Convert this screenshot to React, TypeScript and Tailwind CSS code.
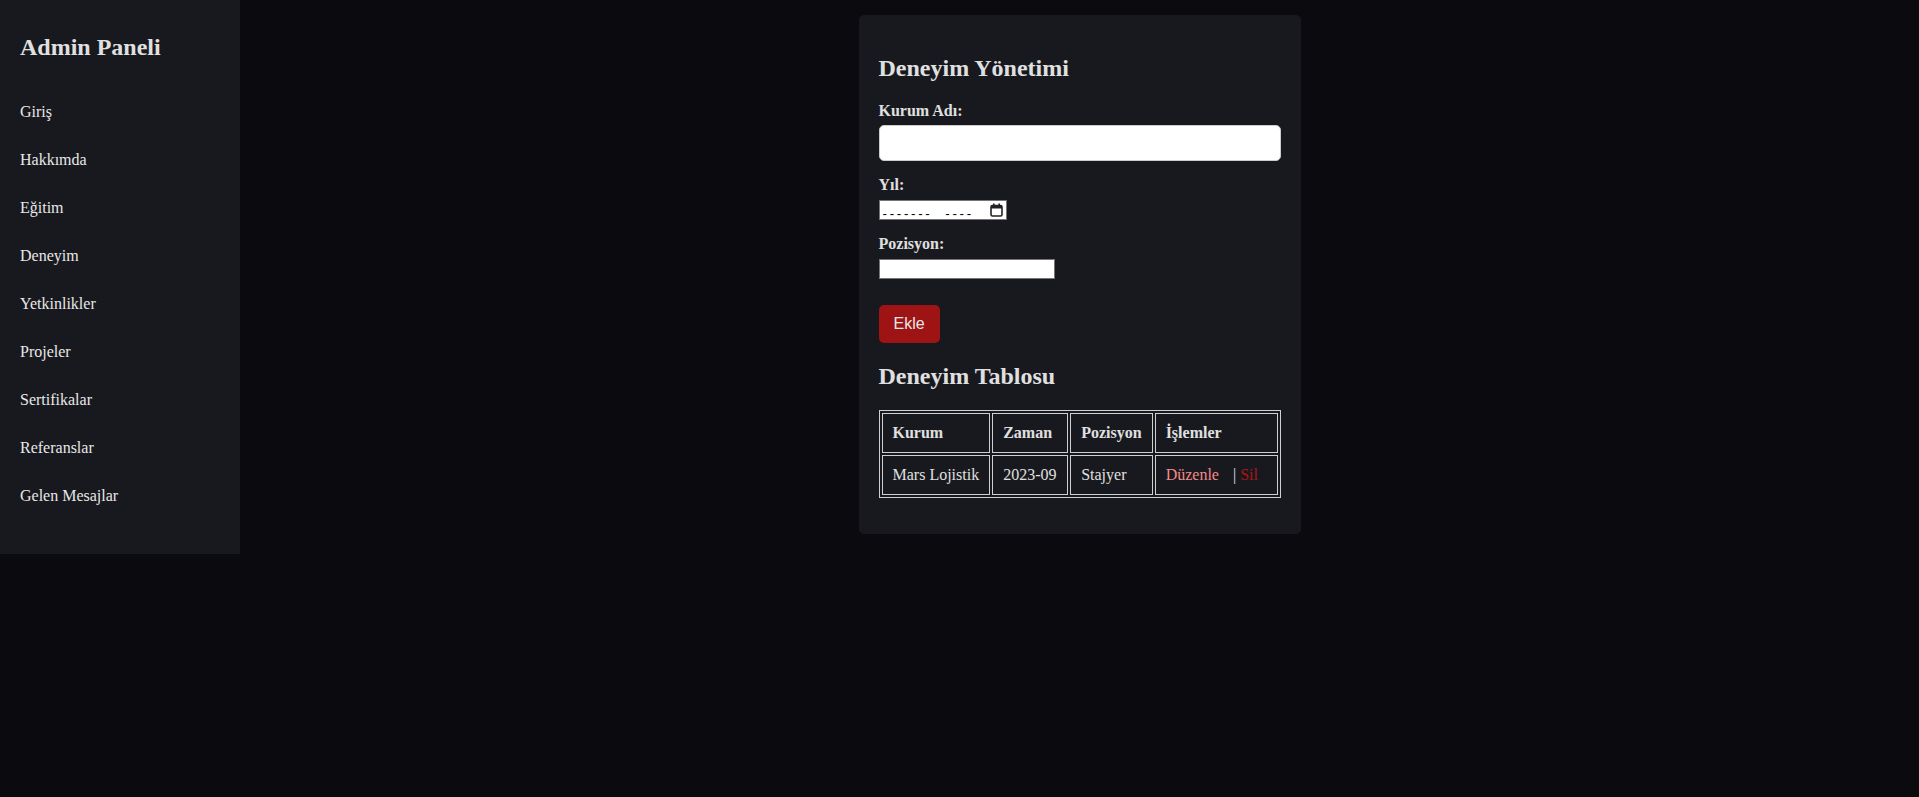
import React, {useState} from 'react'

const MENU = [
    'Giriş',
    'Hakkımda',
    'Eğitim',
    'Deneyim',
    'Yetkinlikler',
    'Projeler',
    'Sertifikalar',
    'Referanslar',
    'Gelen Mesajlar',
]

function CalendarIcon(){
    return (
        <svg width="13" height="14" viewBox="0 0 13 14" className="block">
            <rect x="1" y="2.5" width="11" height="10.5" rx="1.5" fill="none" stroke="#222" strokeWidth="1.6" />
            <rect x="1" y="2.5" width="11" height="3" fill="#222" />
            <rect x="3" y="0.5" width="1.6" height="3" fill="#222" />
            <rect x="8.4" y="0.5" width="1.6" height="3" fill="#222" />
        </svg>
    )
}

export default function App(){
    const [rows] = useState<any[]>([{kurum:'Mars Lojistik',zaman:'2023-09',pozisyon:'Stajyer'}])

    return (
        <div className="min-h-screen w-full flex items-start bg-[#0b0b0f] text-[#e0e0e0] font-['Liberation_Serif',serif]">
            <aside className="w-[240px] shrink-0 bg-[#18191e] px-5 pt-[34px] pb-[34px]">
                <h2 className="text-[24px] leading-[normal] font-bold text-[#e0e0e0]">Admin Paneli</h2>
                <ul className="mt-[27px]">
                    {MENU.map((m,i)=>(
                        <li key={i} className="py-[15px] text-[16px] leading-[18px] text-[#e8e8e8]">
                            <a href="#" className="text-[#e8e8e8]">{m}</a>
                        </li>
                    ))}
                </ul>
            </aside>

            <main className="flex-1 flex justify-center">
                <div className="mt-[15px] w-[442px] bg-[#18191e] rounded-[5px] p-5">
                    <h2 className="mt-[20px] mb-[20px] text-[24px] leading-[normal] font-bold text-[#e0e0e0]">Deneyim Yönetimi</h2>
                    <form onSubmit={e=>e.preventDefault()}>
                        <label className="block text-[16px] leading-[normal] font-bold">Kurum Adı:</label>
                        <input type="text" className="block mt-[5px] w-full h-[36px] bg-white text-black rounded-[5px] border border-[#ccc] px-2" />

                        <label className="block mt-[15px] text-[16px] leading-[normal] font-bold">Yıl:</label>
                        <div className="relative mt-[6px] w-[128px] h-[20px] bg-white border border-[#767676]">
                            <input type="text" placeholder={'-------\u00a0\u00a0----'} className="w-full h-full pl-[3px] pr-[20px] bg-transparent text-black placeholder:text-black text-[13.33px] tracking-[2.7px] font-['Liberation_Sans',sans-serif] outline-none" />
                            <span className="absolute right-[3px] top-[2px] pointer-events-none"><CalendarIcon /></span>
                        </div>

                        <label className="block mt-[15px] text-[16px] leading-[normal] font-bold">Pozisyon:</label>
                        <input type="text" className="block mt-[6px] w-[176px] h-[20px] bg-white text-black border border-[#767676] px-[2px] text-[13.33px] font-['Liberation_Sans',sans-serif]" />

                        <button type="submit" className="mt-[26px] h-[38px] px-[15px] bg-[#9e1414] text-[#e6e6e6] rounded-[5px] text-[16px] font-['Liberation_Sans',sans-serif]">Ekle</button>
                    </form>

                    <h2 className="mt-[20px] mb-[20px] text-[24px] leading-[normal] font-bold text-[#e0e0e0]">Deneyim Tablosu</h2>
                    <table className="w-full mb-[16px] border-separate border-spacing-[2px] border border-[#cfcfcf] text-[16px] leading-[normal]">
                        <thead>
                            <tr>
                                <th className="w-[108px] border border-[#cfcfcf] p-[10px] text-left font-bold">Kurum</th>
                                <th className="w-[76px] border border-[#cfcfcf] p-[10px] text-left font-bold">Zaman</th>
                                <th className="w-[82px] border border-[#cfcfcf] p-[10px] text-left font-bold">Pozisyon</th>
                                <th className="border border-[#cfcfcf] p-[10px] text-left font-bold">İşlemler</th>
                            </tr>
                        </thead>
                        <tbody>
                            {rows.map((r,i)=>(
                                <tr key={i}>
                                    <td className="border border-[#cfcfcf] p-[10px] whitespace-nowrap">{r.kurum}</td>
                                    <td className="border border-[#cfcfcf] p-[10px]">{r.zaman}</td>
                                    <td className="border border-[#cfcfcf] p-[10px]">{r.pozisyon}</td>
                                    <td className="border border-[#cfcfcf] p-[10px] whitespace-nowrap">
                                        <a href="#" className="text-[#f58a8a] mr-[10px]">Düzenle</a> | <a href="#" className="text-[#a81616]">Sil</a>
                                    </td>
                                </tr>
                            ))}
                        </tbody>
                    </table>
                </div>
            </main>
        </div>
    )
}
